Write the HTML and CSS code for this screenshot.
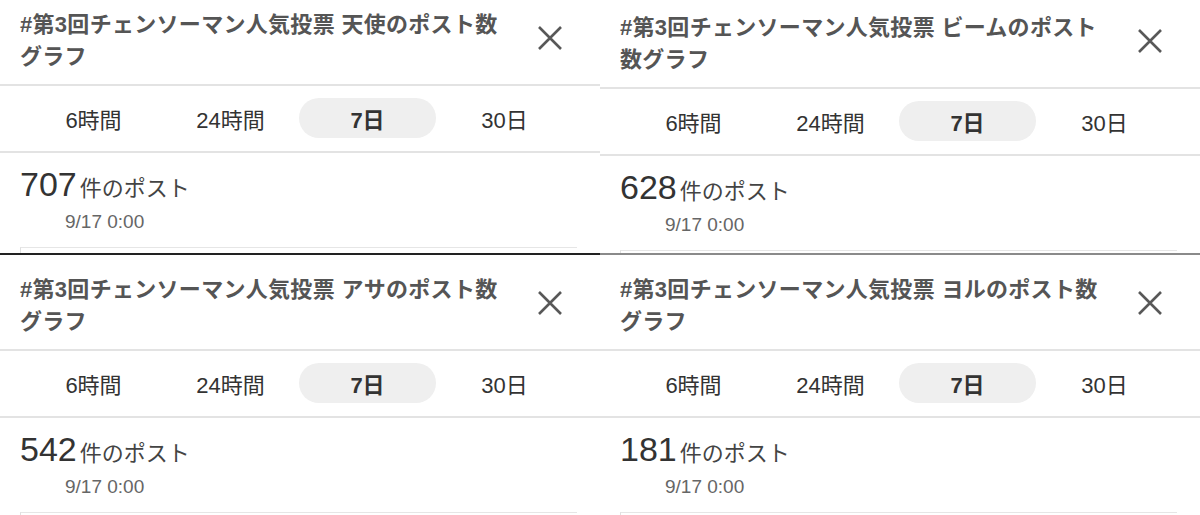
FILE: index.html
```html
<!DOCTYPE html>
<html lang="ja">
<head>
<meta charset="utf-8">
<title>チェンソーマン人気投票 ポスト数グラフ</title>
<link rel="stylesheet" href="styles.css">
</head>
<body>
<main class="board">
  <section class="panel panel--tl">
    <header class="panel-head">
      <h2 class="panel-title">#第3回チェンソーマン人気投票 天使のポスト数グラフ</h2>
      <button class="close" aria-label="閉じる"><svg viewBox="0 0 26 26" width="26" height="26"><path d="M2 2 L24 24 M24 2 L2 24" /></svg></button>
    </header>
    <nav class="tabs">
      <span class="tab">6時間</span><span class="tab">24時間</span><span class="tab is-active">7日</span><span class="tab">30日</span>
    </nav>
    <div class="stats">
      <p class="count"><span class="num">707</span><span class="unit">件のポスト</span></p>
      <p class="date">9/17 0:00</p>
    </div>
    <div class="chart"></div>
  </section>

  <section class="panel panel--tr">
    <header class="panel-head">
      <h2 class="panel-title">#第3回チェンソーマン人気投票 ビームのポスト数グラフ</h2>
      <button class="close" aria-label="閉じる"><svg viewBox="0 0 26 26" width="26" height="26"><path d="M2 2 L24 24 M24 2 L2 24" /></svg></button>
    </header>
    <nav class="tabs">
      <span class="tab">6時間</span><span class="tab">24時間</span><span class="tab is-active">7日</span><span class="tab">30日</span>
    </nav>
    <div class="stats">
      <p class="count"><span class="num">628</span><span class="unit">件のポスト</span></p>
      <p class="date">9/17 0:00</p>
    </div>
    <div class="chart"></div>
  </section>

  <section class="panel panel--bl">
    <header class="panel-head">
      <h2 class="panel-title">#第3回チェンソーマン人気投票 アサのポスト数グラフ</h2>
      <button class="close" aria-label="閉じる"><svg viewBox="0 0 26 26" width="26" height="26"><path d="M2 2 L24 24 M24 2 L2 24" /></svg></button>
    </header>
    <nav class="tabs">
      <span class="tab">6時間</span><span class="tab">24時間</span><span class="tab is-active">7日</span><span class="tab">30日</span>
    </nav>
    <div class="stats">
      <p class="count"><span class="num">542</span><span class="unit">件のポスト</span></p>
      <p class="date">9/17 0:00</p>
    </div>
    <div class="chart"></div>
  </section>

  <section class="panel panel--br">
    <header class="panel-head">
      <h2 class="panel-title">#第3回チェンソーマン人気投票 ヨルのポスト数グラフ</h2>
      <button class="close" aria-label="閉じる"><svg viewBox="0 0 26 26" width="26" height="26"><path d="M2 2 L24 24 M24 2 L2 24" /></svg></button>
    </header>
    <nav class="tabs">
      <span class="tab">6時間</span><span class="tab">24時間</span><span class="tab is-active">7日</span><span class="tab">30日</span>
    </nav>
    <div class="stats">
      <p class="count"><span class="num">181</span><span class="unit">件のポスト</span></p>
      <p class="date">9/17 0:00</p>
    </div>
    <div class="chart"></div>
  </section>
</main>
</body>
</html>
```

FILE: styles.css
```css
* { box-sizing: border-box; }

html, body {
  margin: 0;
  padding: 0;
  background: #fff;
}

body {
  font-family: "Liberation Sans", "Noto Sans CJK JP", sans-serif;
  color: #333;
}

.board {
  display: grid;
  grid-template-columns: 600px 600px;
  grid-template-rows: 255px 260px;
  width: 1200px;
  height: 515px;
  overflow: hidden;
}

.panel {
  overflow: hidden;
  background: #fff;
}

.panel--tl { border-bottom: 2px solid #222; }
.panel--tr { border-bottom: 2px solid #8a8a8a; }

.panel-head {
  display: flex;
  align-items: flex-start;
  gap: 32px;
  padding: 9px 37px 11px 20px;
  border-bottom: 2px solid #e3e3e3;
}

.panel--tr .panel-head { padding-top: 12px; }
.panel--bl .panel-head { padding-top: 19px; }
.panel--br .panel-head { padding-top: 19px; }

.panel-title {
  flex: 1;
  margin: 0;
  font-size: 22px;
  line-height: 32px;
  font-weight: 700;
  letter-spacing: 0.3px;
  color: #555;
}

.close {
  flex: none;
  width: 26px;
  height: 26px;
  margin-top: 16px;
  padding: 0;
  border: none;
  background: none;
}

.close svg {
  display: block;
  fill: none;
  stroke: #585858;
  stroke-width: 2.6;
}

.tabs {
  display: grid;
  grid-template-columns: repeat(4, 1fr);
  padding: 12px 27px 13px 25px;
  border-bottom: 2px solid #e3e3e3;
}

.tab {
  display: flex;
  align-items: center;
  justify-content: center;
  height: 40px;
  border-radius: 20px;
  font-size: 22px;
  color: #333;
}

.tab.is-active {
  background: #efefef;
  font-weight: 700;
}

.stats {
  padding: 11px 20px 0;
}

.count {
  margin: 0;
  font-size: 34px;
  line-height: 40px;
  color: #333;
}

.unit {
  margin-left: 3px;
  font-size: 22px;
  line-height: 1;
  color: #444;
}

.date {
  margin: 7px 0 0 45px;
  font-size: 19px;
  line-height: 22px;
  color: #666;
}

.chart {
  height: 24px;
  margin: 14px 23px 0 20px;
  border-top: 1px solid #e6e6e6;
  border-left: 1px solid #e0e0e0;
}
```
